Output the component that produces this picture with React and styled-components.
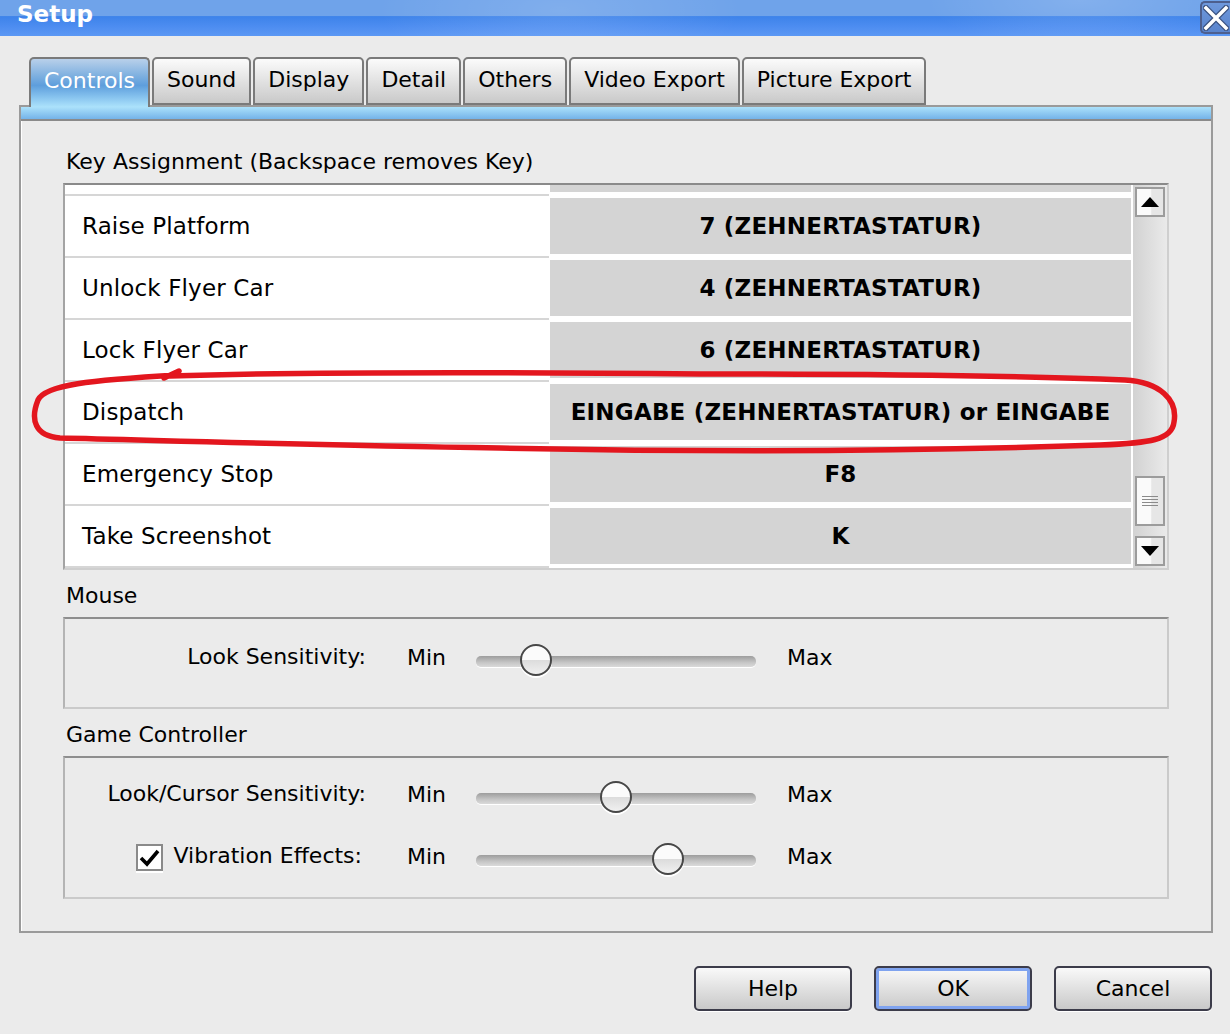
import React, { useLayoutEffect, useRef } from "react";
import styled, { createGlobalStyle } from "styled-components";

const GlobalStyle = createGlobalStyle`
  html, body {
    margin: 0;
    padding: 0;
    background: #ebebeb;
  }
  body {
    font-family: "DejaVu Sans", "Liberation Sans", sans-serif;
    color: #000;
  }
`;

const Window = styled.div`
  position: relative;
  width: 1230px;
  height: 1034px;
  background: #ebebeb;
  overflow: hidden;
`;

const TitleBar = styled.div`
  height: 36px;
  display: flex;
  align-items: flex-start;
  justify-content: space-between;
  background:
    radial-gradient(ellipse 260px 90px at 560px 10px, rgba(255, 255, 255, 0.12), transparent 70%),
    radial-gradient(ellipse 220px 70px at 1080px 0px, rgba(255, 255, 255, 0.14), transparent 70%),
    linear-gradient(#6fa3ea 0%, #6fa3ea 44%, #3d83ea 46%, #4c8cf0 72%, #5c98f4 100%);
`;

const Title = styled.div`
  padding-left: 17px;
  font-size: 23px;
  font-weight: bold;
  line-height: 28px;
  color: #fff;
`;

const CloseButton = styled.div`
  width: 30px;
  height: 33px;
  margin-top: 1px;
  box-sizing: border-box;
  border: 2px solid #4d5f8e;
  border-right: none;
  border-radius: 5px 0 0 5px;
  background: linear-gradient(#6e98dc, #5a84cc);
  display: flex;
  align-items: center;
  justify-content: center;
`;

const Body = styled.div`
  padding: 21px 17px 0 19px;
`;

const TabStrip = styled.div`
  display: flex;
  gap: 2px;
  height: 48px;
  padding-left: 10px;
  position: relative;
  z-index: 1;
`;

const Tab = styled.div`
  height: ${(p) => (p.$active ? "50px" : "48px")};
  box-sizing: border-box;
  padding: 0 13px ${(p) => (p.$active ? "6px" : "4px")};
  display: flex;
  align-items: center;
  font-size: 22px;
  border: 2px solid #7a7a7a;
  border-bottom: ${(p) => (p.$active ? "none" : "2px solid #7a7a7a")};
  border-radius: 5px 5px 0 0;
  color: ${(p) => (p.$active ? "#fff" : "#000")};
  background: ${(p) =>
    p.$active
      ? "linear-gradient(#b9d0ea 0%, #7eb0e0 35%, #5e9edc 55%, #88c4ef 80%, #ace2fb 100%)"
      : "linear-gradient(#fbfbfb, #c9c9c9)"};
`;

const Panel = styled.div`
  height: 828px;
  box-sizing: border-box;
  border: 2px solid #9a9a9a;
  box-shadow: inset 1px 1px 0 #fff;
`;

const Bar = styled.div`
  height: 12px;
  background: linear-gradient(#abe1fb, #74b3e9);
  border-bottom: 2px solid #8a8a8a;
`;

const PanelContent = styled.div`
  padding: 0 42px;
`;

const SectionLabel = styled.div`
  font-size: 22px;
  line-height: 28px;
  padding-left: 3px;
  margin-top: ${(p) => p.$top - 1}px;
  margin-bottom: 7px;
`;

const TableBox = styled.div`
  height: 387px;
  box-sizing: border-box;
  border-top: 2px solid #8a8a8a;
  border-left: 2px solid #a4a4a4;
  border-right: 2px solid #cfcfcf;
  border-bottom: 2px solid #cfcfcf;
  background: #fff;
  display: grid;
  grid-template-columns: 1fr 34px;
`;

const List = styled.div`
  overflow: hidden;
  height: 383px;
`;

const Row = styled.div`
  display: grid;
  grid-template-columns: 484px 1fr;
  height: 62px;
`;

const NameCell = styled.div`
  border-top: 2px solid #d6d6d6;
  padding-left: 17px;
  display: flex;
  align-items: center;
  font-size: 23px;
  letter-spacing: 0.15px;
`;

const KeyCell = styled.div`
  margin: 4px 2px 2px 1px;
  background: #d4d4d4;
  display: flex;
  align-items: center;
  justify-content: center;
  font-size: 23px;
  font-weight: bold;
  letter-spacing: 0.2px;
`;

const ScrollTrack = styled.div`
  background: linear-gradient(90deg, #d2d2d2, #eaeaea);
  display: flex;
  flex-direction: column;
  padding: 2px 0 2px 2px;
`;

const ScrollButton = styled.div`
  width: 30px;
  height: 30px;
  box-sizing: border-box;
  border: 2px solid #9c9c9c;
  background: linear-gradient(90deg, #fafafa 55%, #e6e6e6 56%);
  display: flex;
  align-items: center;
  justify-content: center;
`;

const Thumb = styled.div`
  width: 30px;
  height: 50px;
  box-sizing: border-box;
  border: 2px solid #9c9c9c;
  background: linear-gradient(90deg, #fafafa 55%, #e6e6e6 56%);
  margin-top: auto;
  margin-bottom: 10px;
  display: flex;
  flex-direction: column;
  align-items: center;
  justify-content: center;
  gap: 2px;
`;

const Grip = styled.div`
  width: 16px;
  height: 1px;
  background: #8a8a8a;
`;

const GroupBox = styled.div`
  height: ${(p) => p.$height}px;
  box-sizing: border-box;
  border-top: 2px solid #8e8e8e;
  border-left: 2px solid #b4b4b4;
  border-right: 2px solid #cacaca;
  border-bottom: 2px solid #cacaca;
  padding-top: ${(p) => p.$padTop}px;
  display: flex;
  flex-direction: column;
  gap: ${(p) => p.$gap || 0}px;
`;

const SliderRow = styled.div`
  display: grid;
  grid-template-columns: 301px 41px 70px 279px 31px auto;
  align-items: center;
  height: 32px;
  font-size: 22px;
`;

const RowLabel = styled.div`
  grid-column: 1;
  display: flex;
  justify-content: flex-end;
  align-items: center;
  gap: 11px;
  margin-top: -9px;
  padding-right: ${(p) => (p.$checked ? "4px" : "0")};
`;

const MinMax = styled.div`
  grid-column: ${(p) => p.$col};
  margin-top: -8px;
`;

const Track = styled.div`
  grid-column: 4;
  position: relative;
  height: 11px;
  margin-left: -1px;
  border-radius: 5px;
  background: linear-gradient(#9d9d9d, #c6c6c6 60%, #dadada);
  box-shadow: 0 1px 0 #fff;
`;

const Knob = styled.div`
  position: absolute;
  top: -12px;
  width: 32px;
  height: 32px;
  box-sizing: border-box;
  border-radius: 50%;
  border: 2px solid #474747;
  background: linear-gradient(#fbfbfb 50%, #dcdcdc 51%, #f0f0f0);
  box-shadow: 0 2px 0 #fff;
`;

const CheckBox = styled.div`
  width: 27px;
  height: 27px;
  box-sizing: border-box;
  border: 2px solid #8a8a8a;
  background: #fff;
  box-shadow: 0 2px 0 #fff;
  display: flex;
  align-items: center;
  justify-content: center;
  margin-top: 3px;
`;

const ButtonRow = styled.div`
  display: flex;
  justify-content: flex-end;
  gap: 22px;
  margin-top: 33px;
  margin-right: 1px;
`;

const Button = styled.div`
  width: 158px;
  height: 45px;
  box-sizing: border-box;
  border: 2px solid #3c3c4a;
  border-radius: 5px;
  background: linear-gradient(#f9f9f9, #c9c9c9);
  box-shadow: ${(p) => (p.$default ? "inset 0 0 0 3px #7fa3ef" : "0 1px 0 #fff")};
  display: flex;
  align-items: center;
  justify-content: center;
  font-size: 22px;
`;

const Annotation = styled.svg`
  position: absolute;
  left: 0;
  top: 0;
  pointer-events: none;
`;

const tabs = [
  "Controls",
  "Sound",
  "Display",
  "Detail",
  "Others",
  "Video Export",
  "Picture Export",
];

const keys = [
  ["Lower Platform", "1 (ZEHNERTASTATUR)"],
  ["Raise Platform", "7 (ZEHNERTASTATUR)"],
  ["Unlock Flyer Car", "4 (ZEHNERTASTATUR)"],
  ["Lock Flyer Car", "6 (ZEHNERTASTATUR)"],
  ["Dispatch", "EINGABE (ZEHNERTASTATUR) or EINGABE"],
  ["Emergency Stop", "F8"],
  ["Take Screenshot", "K"],
  ["Toggle Pause", "P"],
];

const Slider = ({ value }) => (
  <Track>
    <Knob style={{ left: `${value * 248}px` }} />
  </Track>
);

const SettingRow = ({ label, value, checked }) => (
  <SliderRow>
    <RowLabel $checked={checked}>
      {checked && (
        <CheckBox>
          <svg width="21" height="19" viewBox="0 0 21 19">
            <path d="M2 10 L8 16 L19 3" fill="none" stroke="#000" strokeWidth="3.6" />
          </svg>
        </CheckBox>
      )}
      <span>{label}</span>
    </RowLabel>
    <MinMax $col={3}>Min</MinMax>
    <Slider value={value} />
    <MinMax $col={6}>Max</MinMax>
  </SliderRow>
);

const KeyTable = () => {
  const listRef = useRef(null);
  useLayoutEffect(() => {
    if (listRef.current) listRef.current.scrollTop = 53;
  }, []);
  return (
    <TableBox>
      <List ref={listRef}>
        {keys.map(([name, key]) => (
          <Row key={name}>
            <NameCell>{name}</NameCell>
            <KeyCell>{key}</KeyCell>
          </Row>
        ))}
      </List>
      <ScrollTrack>
        <ScrollButton>
          <svg width="20" height="12" viewBox="0 0 20 12">
            <path d="M10 1 L19 11 L1 11 Z" fill="#000" />
          </svg>
        </ScrollButton>
        <Thumb>
          <Grip />
          <Grip />
          <Grip />
          <Grip />
        </Thumb>
        <ScrollButton>
          <svg width="20" height="12" viewBox="0 0 20 12">
            <path d="M1 1 L19 1 L10 11 Z" fill="#000" />
          </svg>
        </ScrollButton>
      </ScrollTrack>
    </TableBox>
  );
};

export default function App() {
  return (
    <Window>
      <GlobalStyle />
      <TitleBar>
        <Title>Setup</Title>
        <CloseButton>
          <svg width="26" height="26" viewBox="0 0 26 26">
            <path d="M3 3 L23 23 M23 3 L3 23" stroke="#39507e" strokeWidth="6" strokeLinecap="square" />
            <path d="M3 3 L23 23 M23 3 L3 23" stroke="#fff" strokeWidth="3.5" strokeLinecap="square" />
          </svg>
        </CloseButton>
      </TitleBar>
      <Body>
        <TabStrip>
          {tabs.map((t, i) => (
            <Tab key={t} $active={i === 0}>
              {t}
            </Tab>
          ))}
        </TabStrip>
        <Panel>
          <Bar />
          <PanelContent>
            <SectionLabel $top={28}>Key Assignment (Backspace removes Key)</SectionLabel>
            <KeyTable />
            <SectionLabel $top={13}>Mouse</SectionLabel>
            <GroupBox $height={92} $padTop={26}>
              <SettingRow label="Look Sensitivity:" value={0.177} />
            </GroupBox>
            <SectionLabel $top={13}>Game Controller</SectionLabel>
            <GroupBox $height={143} $padTop={24} $gap={30}>
              <SettingRow label="Look/Cursor Sensitivity:" value={0.5} />
              <SettingRow label="Vibration Effects:" value={0.71} checked />
            </GroupBox>
          </PanelContent>
        </Panel>
        <ButtonRow>
          <Button>Help</Button>
          <Button $default>OK</Button>
          <Button>Cancel</Button>
        </ButtonRow>
      </Body>
      <Annotation width="1230" height="1034" viewBox="0 0 1230 1034">
        <path
          d="M164 378 L179 371 M170 376 C 300 372, 500 372, 700 374 C 900 374, 1050 377, 1125 380 C 1160 382, 1178 400, 1174 422 C 1172 440, 1150 443, 1100 445 C 900 452, 700 452, 500 448 C 300 445, 150 440, 60 438 C 35 436, 30 420, 38 400 C 45 385, 90 380, 178 375"
          fill="none"
          stroke="#e3161e"
          strokeWidth="5.5"
          strokeLinecap="round"
          strokeLinejoin="round"
        />
      </Annotation>
    </Window>
  );
}
